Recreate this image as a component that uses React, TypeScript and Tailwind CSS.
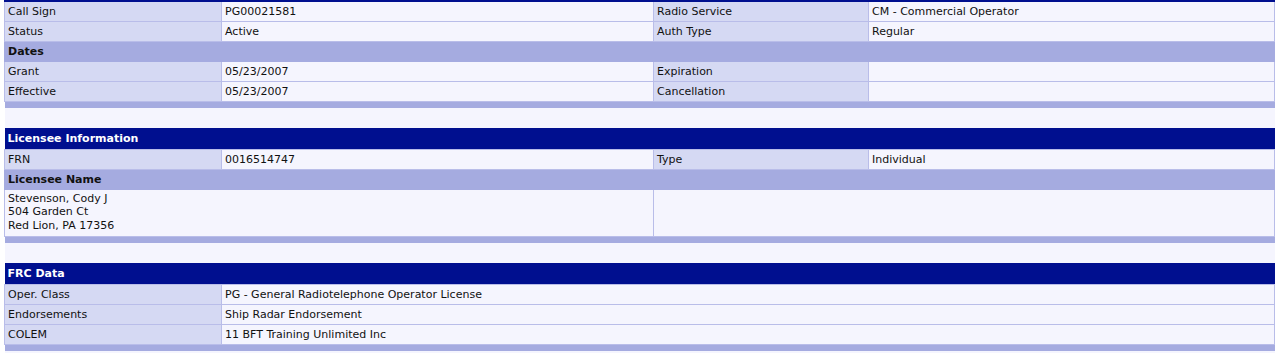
import React from "react";

const F = { fontFamily: '"DejaVu Sans", Verdana, sans-serif' };

function Label({ children }: { children?: React.ReactNode }) {
  return (
    <td className="bg-[#d5d9f3] border border-[#b9bde9] px-[3px] h-[20px] align-middle">
      {children}
    </td>
  );
}
function Val({ children, colSpan }: { children?: React.ReactNode; colSpan?: number }) {
  return (
    <td colSpan={colSpan} className="bg-[#f5f5fe] border border-[#b9bde9] px-[3px] h-[20px] align-middle">
      {children}
    </td>
  );
}
function Sub({ children }: { children?: React.ReactNode }) {
  return (
    <tr>
      <td colSpan={4} className="bg-[#a5abe0] font-bold px-[3px] h-[20px] border border-[#a5abe0]">
        {children}
      </td>
    </tr>
  );
}
function Divider() {
  return (
    <tr>
      <td colSpan={4} className="bg-[#a5abe0] h-[7px] p-0 border-0"></td>
    </tr>
  );
}
function Blank() {
  return (
    <tr>
      <td colSpan={4} className="bg-[#f5f5fe] h-[20px] p-0 border-0"></td>
    </tr>
  );
}
function Head({ children }: { children?: React.ReactNode }) {
  return (
    <tr>
      <td colSpan={4} className="bg-[#000f8f] text-white font-bold px-[3px] h-[21px] border-0">
        {children}
      </td>
    </tr>
  );
}

export default function App() {
  return (
    <div className="w-[1279px] h-[353px] bg-white overflow-hidden pl-[4px]" style={F}>
      <table className="w-[1270px] border-collapse text-[11px] text-[#111] leading-[13px] border-t-2 border-t-[#000f8f] table-fixed">
        <colgroup>
          <col className="w-[217px]" />
          <col className="w-[432px]" />
          <col className="w-[215px]" />
          <col className="w-[406px]" />
        </colgroup>
        <tbody>
          <tr>
            <Label>Call Sign</Label>
            <Val>PG00021581</Val>
            <Label>Radio Service</Label>
            <Val>CM - Commercial Operator</Val>
          </tr>
          <tr>
            <Label>Status</Label>
            <Val>Active</Val>
            <Label>Auth Type</Label>
            <Val>Regular</Val>
          </tr>
          <Sub>Dates</Sub>
          <tr>
            <Label>Grant</Label>
            <Val>05/23/2007</Val>
            <Label>Expiration</Label>
            <Val></Val>
          </tr>
          <tr>
            <Label>Effective</Label>
            <Val>05/23/2007</Val>
            <Label>Cancellation</Label>
            <Val></Val>
          </tr>
          <Divider />
          <Blank />
          <Head>Licensee Information</Head>
          <tr>
            <Label>FRN</Label>
            <Val>0016514747</Val>
            <Label>Type</Label>
            <Val>Individual</Val>
          </tr>
          <Sub>Licensee Name</Sub>
          <tr>
            <td colSpan={2} className="bg-[#f5f5fe] border border-[#b9bde9] px-[3px] pt-[2px] pb-[3px] h-[47px] align-top leading-[13.5px]">
              Stevenson, Cody J<br />504 Garden Ct<br />Red Lion, PA 17356
            </td>
            <td colSpan={2} className="bg-[#f5f5fe] border border-[#b9bde9]"></td>
          </tr>
          <Divider />
          <Blank />
          <Head>FRC Data</Head>
          <tr>
            <Label>Oper. Class</Label>
            <Val colSpan={3}>PG - General Radiotelephone Operator License</Val>
          </tr>
          <tr>
            <Label>Endorsements</Label>
            <Val colSpan={3}>Ship Radar Endorsement</Val>
          </tr>
          <tr>
            <Label>COLEM</Label>
            <Val colSpan={3}>11 BFT Training Unlimited Inc</Val>
          </tr>
          <Divider />
          <Blank />
        </tbody>
      </table>
    </div>
  );
}
